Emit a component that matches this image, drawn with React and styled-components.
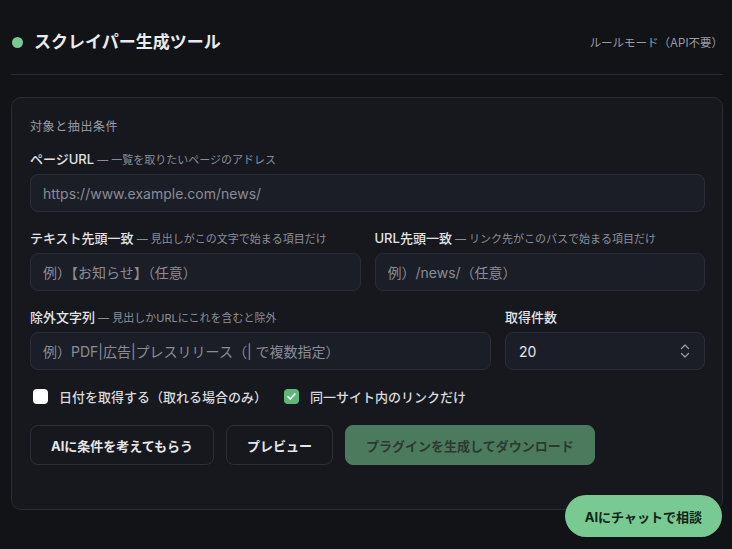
import React, { useState } from 'react'
import styled, { createGlobalStyle } from 'styled-components'

const GlobalStyle = createGlobalStyle`
    * { box-sizing: border-box; }
    body {
        margin: 0;
        background: #121317;
        font-family: "Inter", "Noto Sans CJK JP", sans-serif;
        color: #e6e7ea;
    }
`

function Check({ checked, onToggle, children }) {
    return (
        <CheckLabel onClick={onToggle}>
            <Box $checked={checked}>
                {checked && (
                    <svg width="11" height="11" viewBox="0 0 12 12">
                        <path d="M2.2 6.3l2.5 2.5 5-5.6" fill="none" stroke="#fff" strokeWidth="1.8" strokeLinecap="round" strokeLinejoin="round" />
                    </svg>
                )}
            </Box>
            {children}
        </CheckLabel>
    )
}

function App() {
    const [withDate, setWithDate] = useState(false)
    const [sameSite, setSameSite] = useState(true)
    return (
        <Page>
            <GlobalStyle />
            <Header>
                <Brand>
                    <Dot />
                    <Title>スクレイパー生成ツール</Title>
                </Brand>
                <Mode>ルールモード（API不要）</Mode>
            </Header>

            <Card>
                <SectionTitle>対象と抽出条件</SectionTitle>

                <Field>
                    <Label>ページURL<Hint> — 一覧を取りたいページのアドレス</Hint></Label>
                    <Input placeholder="https://www.example.com/news/" />
                </Field>

                <Row $cols="1fr 1fr">
                    <Field>
                        <Label>テキスト先頭一致<Hint> — 見出しがこの文字で始まる項目だけ</Hint></Label>
                        <Input placeholder="例）【お知らせ】（任意）" />
                    </Field>
                    <Field>
                        <Label>URL先頭一致<Hint> — リンク先がこのパスで始まる項目だけ</Hint></Label>
                        <Input placeholder="例）/news/（任意）" />
                    </Field>
                </Row>

                <Row $cols="1fr 200px">
                    <Field>
                        <Label>除外文字列<Hint> — 見出しかURLにこれを含むと除外</Hint></Label>
                        <Input placeholder="例）PDF|広告|プレスリリース（| で複数指定）" />
                    </Field>
                    <Field>
                        <Label>取得件数</Label>
                        <NumberBox>
                            <NumberValue>20</NumberValue>
                            <svg width="10" height="16" viewBox="0 0 10 16">
                                <path d="M1.5 5.5L5 2l3.5 3.5M1.5 10.5L5 14l3.5-3.5" fill="none" stroke="#9a9ca5" strokeWidth="1.2" strokeLinecap="round" strokeLinejoin="round" />
                            </svg>
                        </NumberBox>
                    </Field>
                </Row>

                <Checks>
                    <Check checked={withDate} onToggle={() => setWithDate(!withDate)}>日付を取得する（取れる場合のみ）</Check>
                    <Check checked={sameSite} onToggle={() => setSameSite(!sameSite)}>同一サイト内のリンクだけ</Check>
                </Checks>

                <Actions>
                    <Button>AIに条件を考えてもらう</Button>
                    <Button $min="106px">プレビュー</Button>
                    <Button $primary disabled>プラグインを生成してダウンロード</Button>
                </Actions>
            </Card>

            <ChatButton>AIにチャットで相談</ChatButton>
        </Page>
    )
}

const Page = styled.div`
    padding: 0 9px 40px 11px;
    min-height: 100vh;`
const Header = styled.header`
    display: flex;
    align-items: center;
    justify-content: space-between;
    padding: 29px 0 19px;
    border-bottom: 1px solid #2a2c34;`
const Brand = styled.div`
    display: flex;
    align-items: center;
    gap: 11px;`
const Dot = styled.span`
    width: 11px;
    height: 11px;
    margin-left: 1px;
    border-radius: 50%;
    background: #79c993;`
const Title = styled.h1`
    margin: 0;
    font-size: 17px;
    line-height: 26px;
    font-weight: 700;
    color: #e9eaed;`
const Mode = styled.span`
    font-size: 11.5px;
    color: #9a9ca5;`
const Card = styled.section`
    margin-top: 22px;
    background: #17181d;
    border: 1px solid #2a2c34;
    border-radius: 10px;
    padding: 20px 17px 44px 18px;`
const SectionTitle = styled.div`
    font-size: 12px;
    line-height: 17px;
    letter-spacing: 0.6px;
    color: #9a9ca5;
    margin-bottom: 15px;`
const Field = styled.div`
    display: flex;
    flex-direction: column;
    gap: 6px;
    margin-bottom: 17px;
    min-width: 0;`
const Row = styled.div`
    display: grid;
    grid-template-columns: ${props => props.$cols};
    column-gap: 14px;`
const Label = styled.div`
    height: 18px;
    font-size: 13px;
    line-height: 18px;
    font-weight: 500;
    color: #e2e3e7;
    white-space: nowrap;`
const Hint = styled.span`
    font-size: 11px;
    line-height: 1;
    font-weight: 400;
    color: #8b8e99;`
const Input = styled.input`
    height: 38px;
    width: 100%;
    background: #1c1e27;
    border: 1px solid #2a2d38;
    border-radius: 8px;
    padding: 0 12px;
    font-family: inherit;
    font-size: 14px;
    color: #e4e5e8;
    outline: none;
    &::placeholder { color: #8a8c95; }`
const NumberBox = styled.div`
    height: 38px;
    display: flex;
    align-items: center;
    justify-content: space-between;
    background: #1c1e27;
    border: 1px solid #2a2d38;
    border-radius: 8px;
    padding: 0 14px 0 13px;`
const NumberValue = styled.span`
    font-size: 14px;
    color: #e4e5e8;`
const Checks = styled.div`
    display: flex;
    align-items: center;
    gap: 17px;
    margin: 0 0 19px 3px;`
const CheckLabel = styled.label`
    display: flex;
    align-items: center;
    gap: 11px;
    font-size: 13px;
    font-weight: 500;
    color: #d9dade;
    cursor: pointer;`
const Box = styled.span`
    width: 15px;
    height: 15px;
    border-radius: 4px;
    display: flex;
    align-items: center;
    justify-content: center;
    background: ${props => props.$checked ? '#5fb87a' : '#ffffff'};`
const Actions = styled.div`
    display: flex;
    gap: 12px;`
const Button = styled.button`
    height: 40px;
    min-width: ${props => props.$min || 'auto'};
    padding: 0 20px;
    border-radius: 8px;
    font-family: inherit;
    font-size: 13px;
    font-weight: 700;
    border: 1px solid ${props => props.$primary ? '#4b7a5c' : '#2e3039'};
    background: ${props => props.$primary ? '#4b7a5c' : 'transparent'};
    color: ${props => props.$primary ? '#2b3b30' : '#e6e7ea'};
    cursor: pointer;
    &:disabled { cursor: not-allowed; }`
const ChatButton = styled.button`
    position: fixed;
    right: 10px;
    bottom: 12px;
    height: 42px;
    padding: 0 20px;
    border: none;
    border-radius: 21px;
    background: #79c993;
    color: #13241a;
    font-family: inherit;
    font-size: 13px;
    font-weight: 700;
    cursor: pointer;`

export default App
